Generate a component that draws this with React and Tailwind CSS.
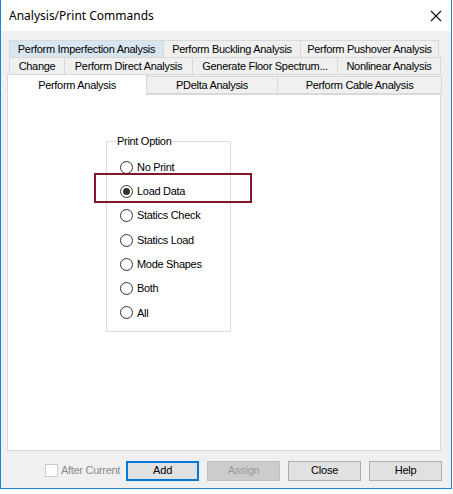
import React, { useState } from 'react';

const ui = { fontFamily: '"Liberation Sans", Arial, sans-serif' };

function Tab({ label, w, hover }) {
  return (
    <div
      className={`h-[18px] border border-[#d9d9d9] -ml-px first:ml-0 flex items-center justify-center text-[11px] tracking-[-0.3px] text-black whitespace-nowrap ${
        hover ? 'bg-[#d8e6f2]' : 'bg-[#f0f0f0]'
      }`}
      style={{ width: w }}
    >
      {label}
    </div>
  );
}

function Radio({ label, checked, onClick }) {
  return (
    <div className="flex items-center h-[24.3px] cursor-default" onClick={onClick}>
      <span className="w-[13px] h-[13px] rounded-full border border-[#333] bg-white flex items-center justify-center">
        {checked && <span className="w-[7px] h-[7px] rounded-full bg-[#333]" />}
      </span>
      <span className="ml-[4px] text-[11px] tracking-[-0.3px] text-black">{label}</span>
    </div>
  );
}

function Btn({ label, focused, disabled }) {
  return (
    <button
      className={`w-[73px] h-[20px] text-[11px] tracking-[-0.2px] flex items-center justify-center ${
        disabled
          ? 'bg-[#cccccc] border border-[#bfbfbf] text-[#9a9a9a]'
          : focused
          ? 'bg-[#e1e1e1] border-2 border-[#0078d7] text-black'
          : 'bg-[#e1e1e1] border border-[#adadad] text-black'
      }`}
    >
      {label}
    </button>
  );
}

export default function App() {
  const [sel, setSel] = useState('Load Data');
  const options = ['No Print', 'Load Data', 'Statics Check', 'Statics Load', 'Mode Shapes', 'Both', 'All'];

  return (
    <div className="w-[453px] h-[494px] bg-white overflow-hidden" style={ui}>
      <div className="w-[452px] h-[489px] border-l border-r border-b border-[#1883d7] bg-[#f0f0f0] flex flex-col">
        {/* title bar */}
        <div className="h-[31px] bg-white flex items-center justify-between pl-[8px] pr-[9px] shrink-0">
          <span className="text-[12px] text-black" style={{ fontFamily: '"Noto Sans", "Liberation Sans", sans-serif' }}>
            Analysis/Print Commands
          </span>
          <svg width="12" height="12" viewBox="0 0 12 12">
            <path d="M1 1 L11 11 M11 1 L1 11" stroke="#111" strokeWidth="1.1" fill="none" />
          </svg>
        </div>

        {/* tabs */}
        <div className="pl-[8px] pt-[9px] flex flex-col">
          <div className="flex">
            <Tab label="Perform Imperfection Analysis" w={155} hover />
            <Tab label="Perform Buckling Analysis" w={138} />
            <Tab label="Perform Pushover Analysis" w={139} />
          </div>
          <div className="flex -mt-px">
            <Tab label="Change" w={56} />
            <Tab label="Perform Direct Analysis" w={129} />
            <Tab label="Generate Floor Spectrum..." w={146} />
            <Tab label="Nonlinear Analysis" w={104} />
          </div>
        </div>
        <div className="pl-[6px] flex items-end h-[20px] -mt-px relative z-10">
          <div className="w-[140px] h-[21px] bg-white border-t border-l border-r border-[#d9d9d9] flex items-start justify-center pt-[2px] text-[11px] tracking-[-0.3px] -mb-px">
            Perform Analysis
          </div>
          <div className="w-[131px] h-[18px] bg-[#f0f0f0] border border-[#d9d9d9] border-l-0 flex items-center justify-center text-[11px] tracking-[-0.3px]">
            PDelta Analysis
          </div>
          <div className="w-[164px] h-[18px] bg-[#f0f0f0] border border-[#d9d9d9] border-l-0 flex items-center justify-center text-[11px] tracking-[-0.3px]">
            Perform Cable Analysis
          </div>
        </div>

        {/* panel */}
        <div className="ml-[6px] w-[434px] h-[360px] bg-white border border-[#d9d9d9] relative">
          <div className="absolute left-[-1px] top-[-1px] w-[140px] h-[2px] bg-white" />
          <div className="pl-[98px] pt-[41px]">
            <fieldset className="w-[125px] h-[196px] border border-[#dcdcdc] pl-[13px] pt-[9px] relative">
              <legend className="text-[11px] tracking-[-0.3px] px-[2px] ml-[-5px] leading-[11px]">Print Option</legend>
              <div className="-mt-[1px]">
                {options.map((o) => (
                  <Radio key={o} label={o} checked={sel === o} onClick={() => setSel(o)} />
                ))}
              </div>
            </fieldset>
          </div>
          {/* highlight frame */}
          <div className="absolute left-[86px] top-[78px] w-[158px] h-[30px] border-2 border-[#85122b]" />
        </div>

        {/* footer */}
        <div className="flex items-center h-[37px] pl-[44px] pt-[2px]">
          <span className="w-[13px] h-[13px] border border-[#cccccc] bg-white" />
          <span className="ml-[3px] text-[11px] tracking-[-0.3px] text-[#8a8a8a]">After Current</span>
          <div className="ml-[6px] flex gap-[8px]">
            <Btn label="Add" focused />
            <Btn label="Assign" disabled />
            <Btn label="Close" />
            <Btn label="Help" />
          </div>
        </div>
      </div>
    </div>
  );
}
